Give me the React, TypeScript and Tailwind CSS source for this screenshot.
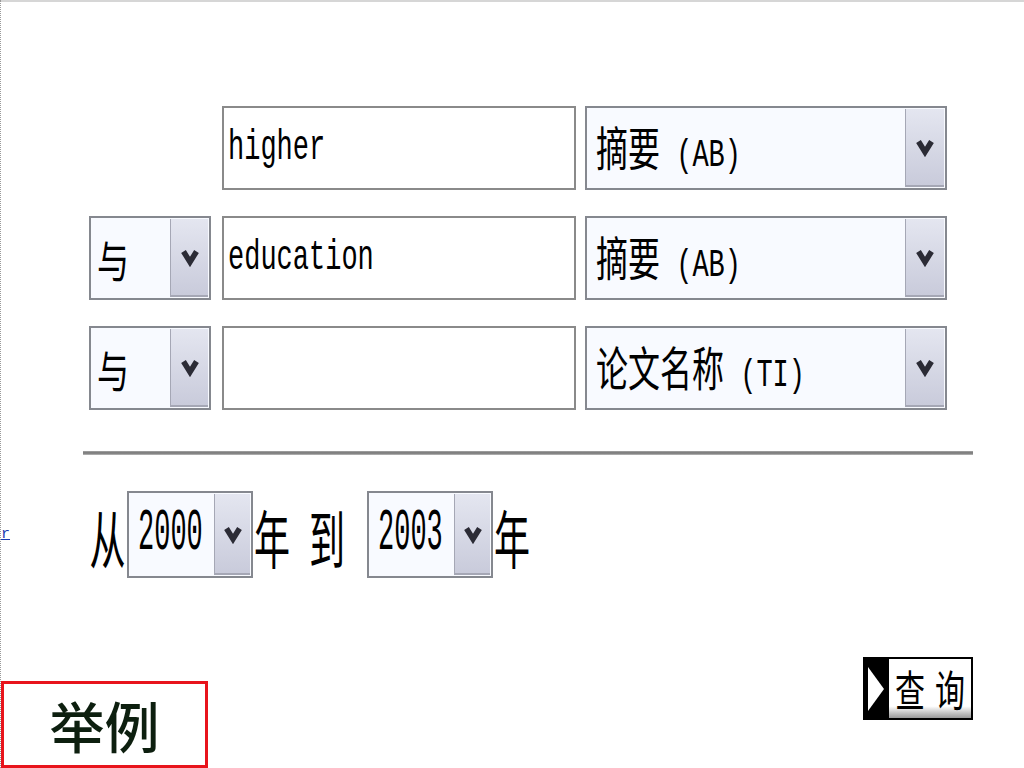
import React from 'react'

const mono = "font-['Liberation_Mono','Noto_Sans_CJK_SC',monospace]"
const cjk = "font-['Noto_Sans_CJK_SC',sans-serif]"

function Chevron() {
  return (
    <svg width="18" height="20" viewBox="0 0 18 20">
      <path d="M2.5 4.5 L9 15 L15.5 4.5" fill="none" stroke="#2b2b35" strokeWidth="5.5" />
    </svg>
  )
}

type SelectProps = {
  box: string
  btn: string
  pad: string
  children: React.ReactNode
}

function Select({ box, btn, pad, children }: SelectProps) {
  return (
    <div className={`flex border-2 border-[#85888f] bg-[#f8faff] ${box}`}>
      <div className={`flex flex-1 items-center overflow-hidden whitespace-pre ${pad}`}>{children}</div>
      <div
        className={`my-[1px] mr-[1px] flex items-center justify-center border-l border-b-2 border-[#a5a7b5] bg-gradient-to-b from-[#e4e6f0] to-[#c9cbdb] ${btn}`}
      >
        <Chevron />
      </div>
    </div>
  )
}

function Field({ value }: { value: string }) {
  return (
    <div className="flex h-[84px] w-[354px] items-center border-2 border-[#8a8a8a] bg-white pl-[4px]">
      <span className={`inline-block scale-y-[1.55] text-[27px] text-black ${mono}`}>{value}</span>
    </div>
  )
}

function FieldLabel({ zh, en }: { zh: string; en: string }) {
  return (
    <span className="inline-block scale-y-[1.45] text-black">
      <span className={`text-[32px] ${cjk}`}>{zh}</span>
      <span className={`text-[27px] ${mono}`}> {en}</span>
    </span>
  )
}

function AndSelect() {
  return (
    <Select box="h-[84px] w-[122px]" btn="w-[38px]" pad="pl-[6px]">
      <span className={`inline-block scale-y-[1.4] text-[32px] text-black ${cjk}`}>与</span>
    </Select>
  )
}

function YearSelect({ year }: { year: string }) {
  return (
    <Select box="h-[87px] w-[126px]" btn="w-[36px]" pad="pl-[9px]">
      <span className={`inline-block scale-y-[2.2] text-[27px] text-black ${mono}`}>{year}</span>
    </Select>
  )
}

function Zh({ text, w }: { text: string; w: string }) {
  return (
    <span className={`inline-block scale-y-[1.75] text-center text-[36px] text-black ${cjk} ${w}`}>{text}</span>
  )
}

export default function App() {
  const rows = [
    { first: false, value: 'higher', zh: '摘要', en: '(AB)' },
    { first: true, value: 'education', zh: '摘要', en: '(AB)' },
    { first: true, value: '', zh: '论文名称', en: '(TI)' },
  ]

  return (
    <div className="flex h-[768px] w-[1024px] flex-col overflow-hidden border-l border-dotted border-[#9a9a9a] bg-white">
      <div className="h-[2px] bg-[#d6d6d6]" />

      <div className="pl-[88px] pt-[104px]">
        <div className="flex flex-col gap-[26px]">
          {rows.map((r, i) => (
            <div key={i} className="flex h-[84px]">
              {r.first ? <AndSelect /> : <div className="w-[122px]" />}
              <div className="ml-[11px]">
                <Field value={r.value} />
              </div>
              <div className="ml-[9px]">
                <Select box="h-[84px] w-[362px]" btn="w-[39px]" pad="pl-[9px]">
                  <FieldLabel zh={r.zh} en={r.en} />
                </Select>
              </div>
            </div>
          ))}
        </div>

        <div className="ml-[-6px] mt-[41px] h-[4px] w-[890px] bg-gradient-to-b from-[#a8a8a8] via-[#737373] to-[#bdbdbd]" />
      </div>

      <div className="mt-[36px] flex h-[87px] items-center">
        <span className={`w-[10px] text-[15px] leading-none text-[#1a3ab0] underline ${mono}`}>r</span>
        <div className="ml-[77px] flex items-center">
          <Zh text="从" w="w-[39px]" />
          <YearSelect year="2000" />
          <Zh text="年" w="w-[38px]" />
          <Zh text="到" w="ml-[17px] w-[38px]" />
          <div className="ml-[21px]">
            <YearSelect year="2003" />
          </div>
          <Zh text="年" w="w-[38px]" />
        </div>
      </div>

      <div className="flex flex-1 items-end justify-between">
        <div className="flex h-[87px] w-[207px] items-center justify-center border-[3px] border-[#e8141c] bg-white">
          <span className={`text-[55px] font-medium leading-none text-[#0d1f0f] ${cjk}`}>举例</span>
        </div>

        <div className="mb-[48px] mr-[51px] flex h-[63px] w-[110px] border-2 border-black bg-white">
          <div className="flex w-[24px] items-center justify-start bg-black pl-[3px]">
            <svg width="16" height="44" viewBox="0 0 16 44">
              <polygon points="0,0 16,22 0,44" fill="#ffffff" />
            </svg>
          </div>
          <div className="flex flex-1 items-center justify-center bg-gradient-to-b from-white from-80% to-[#9a9a9a]">
            <span className={`inline-block scale-y-[1.45] text-[30px] text-black ${cjk}`}>
              查<span className="ml-[10px]">询</span>
            </span>
          </div>
        </div>
      </div>
    </div>
  )
}
